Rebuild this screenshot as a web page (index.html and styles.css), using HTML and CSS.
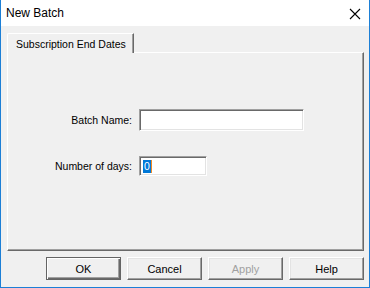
FILE: index.html
```html
<!DOCTYPE html>
<html>
<head>
<meta charset="utf-8">
<link rel="stylesheet" href="styles.css">
</head>
<body>
<div class="window">
  <div class="titlebar">
    <span class="title">New Batch</span>
    <svg class="close" width="12" height="12" viewBox="0 0 12 12"><path d="M1 1 L11 11 M11 1 L1 11" stroke="#000" stroke-width="1.1" fill="none"/></svg>
  </div>
  <div class="client">
    <div class="tabs"><div class="tab">Subscription End Dates</div></div>
    <div class="panel">
      <div class="form">
        <label class="lbl">Batch Name:</label>
        <div class="field wide"></div>
        <label class="lbl">Number of days:</label>
        <div class="field narrow"><span class="sel">0</span></div>
      </div>
    </div>
    <div class="buttons">
      <button class="btn default">OK</button>
      <button class="btn">Cancel</button>
      <button class="btn disabled">Apply</button>
      <button class="btn">Help</button>
    </div>
  </div>
</div>
</body>
</html>
```
FILE: styles.css
```css
* { box-sizing: border-box; }
html, body { margin: 0; padding: 0; }
body { width: 370px; height: 288px; overflow: hidden; font-family: "Liberation Sans", Arial, sans-serif; font-size: 10.5px; color: #000; }
.window {
  width: 370px; height: 288px;
  border-left: 1px solid #1c7fd6; border-right: 1px solid #1c7fd6; border-bottom: 1px solid #1c7fd6;
  background: #f0f0f0;
  display: flex; flex-direction: column;
}
.titlebar {
  height: 26px; background: #fff;
  display: flex; align-items: center; justify-content: space-between;
  padding: 0 8px 0 5px;
}
.title { font-size: 12px; }
.close { display: block; margin-top: 1px; }
.client { flex: 1; display: flex; flex-direction: column; padding: 7px 5px 7px 6px; }
.tabs { display: flex; height: 19px; position: relative; z-index: 1; }
.tab {
  height: 20px; padding: 4px 7px 0 8px;
  border-top: 1px solid #fff; border-left: 1px solid #fff;
  border-right: 1px solid #696969;
  box-shadow: inset -1px 0 0 #a0a0a0;
  border-top-left-radius: 2px;
  background: #f0f0f0;
  white-space: nowrap;
}
.panel {
  height: 199px;
  border-top: 1px solid #fff; border-left: 1px solid #fff;
  border-right: 1px solid #696969; border-bottom: 1px solid #696969;
  box-shadow: inset -1px -1px 0 #a0a0a0;
  padding-top: 56px;
}
.form {
  display: grid; grid-template-columns: 124px auto; column-gap: 7px; row-gap: 25px;
  align-items: center; justify-items: start;
}
.lbl { justify-self: end; }
.field {
  background: #fff;
  border-top: 1px solid #a0a0a0; border-left: 1px solid #a0a0a0;
  border-right: 1px solid #fff; border-bottom: 1px solid #fff;
  box-shadow: inset 1px 1px 0 #696969, inset -1px -1px 0 #e3e3e3;
  padding: 2px 3px;
}
.wide { width: 165px; height: 22px; }
.narrow { width: 68px; height: 20px; display: flex; align-items: center; }
.sel { background: #0078d7; color: #fff; padding: 0 1px; line-height: 13px; box-shadow: 1px 0 0 #f08a24; }
.buttons { display: flex; justify-content: flex-end; gap: 6px; margin-top: 6px; }
.btn {
  width: 75px; height: 23px; margin: 0; padding: 0;
  font-family: inherit; font-size: 11px; color: #000;
  background: #f0f0f0;
  border-top: 1px solid #fff; border-left: 1px solid #fff;
  border-right: 1px solid #696969; border-bottom: 1px solid #696969;
  box-shadow: inset -1px -1px 0 #a0a0a0, inset 1px 1px 0 #e3e3e3;
}
.btn.default {
  border: 1px solid #646464;
  box-shadow: inset 1px 1px 0 #fff, inset -1px -1px 0 #696969, inset -2px -2px 0 #a0a0a0;
}
.btn.disabled { color: #a0a0a0; }
```
